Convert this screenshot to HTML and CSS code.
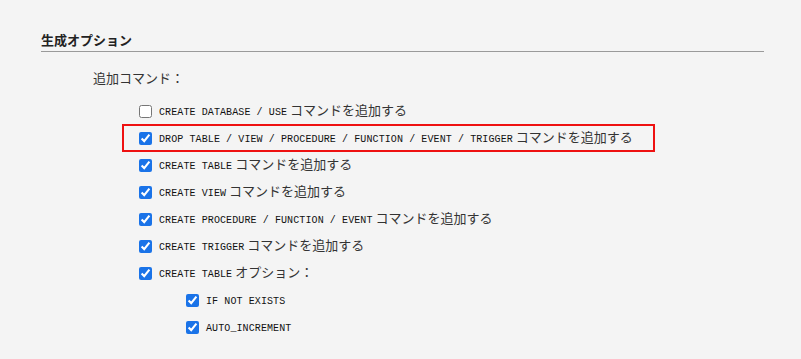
FILE: index.html
```html
<!DOCTYPE html>
<html lang="ja">
<head>
  <meta charset="UTF-8">
  <title>生成オプション</title>
  <link rel="stylesheet" href="styles.css">
</head>
<body>

<!-- 生成オプション -->
<div class="options">
  <h2 class="options-title">生成オプション</h2>

  <div class="options-group">
    <div class="group-label">追加コマンド：</div>

    <label class="opt">
      <input type="checkbox">
      <span><code>CREATE DATABASE / USE</code> コマンドを追加する</span>
    </label>
    <label class="opt opt-marked">
      <input type="checkbox" checked>
      <span><code>DROP TABLE / VIEW / PROCEDURE / FUNCTION / EVENT / TRIGGER</code> コマンドを追加する</span>
    </label>
    <label class="opt">
      <input type="checkbox" checked>
      <span><code>CREATE TABLE</code> コマンドを追加する</span>
    </label>
    <label class="opt">
      <input type="checkbox" checked>
      <span><code>CREATE VIEW</code> コマンドを追加する</span>
    </label>
    <label class="opt">
      <input type="checkbox" checked>
      <span><code>CREATE PROCEDURE / FUNCTION / EVENT</code> コマンドを追加する</span>
    </label>
    <label class="opt">
      <input type="checkbox" checked>
      <span><code>CREATE TRIGGER</code> コマンドを追加する</span>
    </label>
    <label class="opt">
      <input type="checkbox" checked>
      <span><code>CREATE TABLE</code> オプション：</span>
    </label>

    <div class="sub-options">
      <label class="opt">
        <input type="checkbox" checked>
        <span><code>IF NOT EXISTS</code></span>
      </label>
      <label class="opt">
        <input type="checkbox" checked>
        <span><code>AUTO_INCREMENT</code></span>
      </label>
    </div>
  </div>
</div>

</body>
</html>
```

FILE: styles.css
```css
/* --- base --- */
body {
  margin: 0;
  background-color: #f4f4f4;
  color: #222;
  font-family: "Noto Sans CJK JP", "Noto Sans", sans-serif;
  font-size: 13px;
}

/* --- 生成オプション --- */
.options {
  width: 723px;
  margin-left: 41px;
  padding-top: 31px;
}

.options-title {
  margin: 0;
  padding-bottom: 2px;
  font-size: 13px;
  line-height: 18px;
  font-weight: bold;
  color: #222;
  border-bottom: 1px solid #9a9a9a;
}

.options-group {
  padding-left: 52px;
  padding-top: 17px;
}

.group-label {
  line-height: 18px;
  margin-bottom: 11px;
  color: #333;
}

.opt {
  display: flex;
  align-items: center;
  gap: 7px;
  height: 27px;
  margin-left: 46px;
  cursor: pointer;
}

.opt input {
  width: 13px;
  height: 13px;
  margin: 0;
  accent-color: #1a73e8;
}

.opt span {
  line-height: 18px;
  white-space: nowrap;
  color: #333;
}

.opt code {
  font-family: "Liberation Mono", "DejaVu Sans Mono", monospace;
  font-size: 10px;
  letter-spacing: 0.1px;
  color: #111;
}

/* highlighted row */
.opt-marked {
  box-sizing: border-box;
  width: fit-content;
  height: 28px;
  margin-top: -1px;
  margin-left: 29px;
  padding-left: 15px;
  padding-right: 20px;
  border: 2px solid #ee1111;
}

.sub-options {
  margin-left: 47px;
}
```
